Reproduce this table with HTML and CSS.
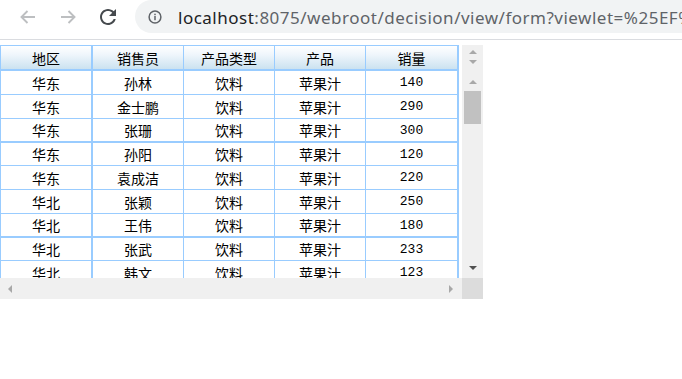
FILE: index.html
```html
<!DOCTYPE html>
<html lang="zh-CN">
<head>
<meta charset="utf-8">
<title>form</title>
<link rel="stylesheet" href="styles.css">
</head>
<body>
<div class="toolbar">
  <svg class="icon" viewBox="0 0 24 24" width="24" height="24"><path d="M19 12H5.5M11.5 6l-6 6 6 6" fill="none" stroke="#bdbfc1" stroke-width="1.9"/></svg>
  <svg class="icon" viewBox="0 0 24 24" width="24" height="24"><path d="M5 12h13.5M12.5 6l6 6-6 6" fill="none" stroke="#bdbfc1" stroke-width="1.9"/></svg>
  <svg class="icon" viewBox="0 0 24 24" width="24" height="24"><path d="M17.65 6.35C16.2 4.9 14.21 4 12 4c-4.42 0-7.990 3.58-7.99 8s3.57 8 7.99 8c3.73 0 6.84-2.55 7.73-6h-2.08c-.82 2.33-3.04 4-5.65 4-3.31 0-6-2.69-6-6s2.69-6 6-6c1.66 0 3.14.69 4.22 1.78L13 11h7V4l-2.35 2.35z" fill="#464a4e"/></svg>
  <div class="omnibox">
    <svg class="info" viewBox="0 0 14 14" width="14" height="14"><circle cx="7" cy="7" r="5.9" fill="none" stroke="#5f6368" stroke-width="1.5"/><rect x="6.25" y="6" width="1.5" height="4.2" fill="#5f6368"/><rect x="6.25" y="3.7" width="1.5" height="1.5" fill="#5f6368"/></svg>
    <span class="url"><span class="host">localhost</span><span class="path">:8075/webroot/decision/view/form?viewlet=%25EF%BC</span></span>
  </div>
</div>
<div class="report">
  <div class="grid">
    <div class="sheet">
      <div class="row head"><div class="c c1">地区</div><div class="c">销售员</div><div class="c">产品类型</div><div class="c">产品</div><div class="c c5">销量</div></div>
      <div class="row"><div class="c c1">华东</div><div class="c">孙林</div><div class="c">饮料</div><div class="c">苹果汁</div><div class="c c5 num">140</div></div>
      <div class="row"><div class="c c1">华东</div><div class="c">金士鹏</div><div class="c">饮料</div><div class="c">苹果汁</div><div class="c c5 num">290</div></div>
      <div class="row thick"><div class="c c1">华东</div><div class="c">张珊</div><div class="c">饮料</div><div class="c">苹果汁</div><div class="c c5 num">300</div></div>
      <div class="row thin"><div class="c c1">华东</div><div class="c">孙阳</div><div class="c">饮料</div><div class="c">苹果汁</div><div class="c c5 num">120</div></div>
      <div class="row"><div class="c c1">华东</div><div class="c">袁成洁</div><div class="c">饮料</div><div class="c">苹果汁</div><div class="c c5 num">220</div></div>
      <div class="row"><div class="c c1">华北</div><div class="c">张颖</div><div class="c">饮料</div><div class="c">苹果汁</div><div class="c c5 num">250</div></div>
      <div class="row thick"><div class="c c1">华北</div><div class="c">王伟</div><div class="c">饮料</div><div class="c">苹果汁</div><div class="c c5 num">180</div></div>
      <div class="row thin"><div class="c c1">华北</div><div class="c">张武</div><div class="c">饮料</div><div class="c">苹果汁</div><div class="c c5 num">233</div></div>
      <div class="row"><div class="c c1">华北</div><div class="c">韩文</div><div class="c">饮料</div><div class="c">苹果汁</div><div class="c c5 num">123</div></div>
    </div>
  </div>
  <div class="vscroll">
    <div class="up off a1"></div>
    <div class="down off a2"></div>
    <div class="up off a3"></div>
    <div class="thumb"></div>
    <div class="spacer"></div>
    <div class="down on a4"></div>
  </div>
  <div class="hscroll">
    <div class="left"></div>
    <div class="right"></div>
  </div>
  <div class="corner"></div>
</div>
</body>
</html>
```
FILE: styles.css
```css
html, body {
  margin: 0;
  padding: 0;
  background: #ffffff;
}
body {
  width: 682px;
  height: 379px;
  overflow: hidden;
}
.toolbar {
  height: 39px;
  border-bottom: 1px solid #dadce0;
  box-sizing: content-box;
  display: flex;
  align-items: flex-start;
  padding-left: 16px;
  gap: 16px;
  overflow: hidden;
}
.icon {
  display: block;
  margin-top: 5px;
  flex: none;
}
.omnibox {
  flex: none;
  width: 560px;
  height: 33px;
  margin-left: -1px;
  background: #f1f3f4;
  border-radius: 17px 0 0 17px;
  display: flex;
  align-items: center;
  padding-left: 13px;
  box-sizing: border-box;
  white-space: nowrap;
  overflow: hidden;
}
.info {
  display: block;
  flex: none;
}
.url {
  margin-left: 16px;
  font-family: "Noto Sans", "Open Sans", sans-serif;
  font-size: 17px;
  letter-spacing: 0.5px;
  position: relative;
  top: 1px;
}
.host { color: #202124; }
.path { color: #5f6368; }

.report {
  margin-top: 5px;
  display: grid;
  grid-template-columns: 462px 21px;
  grid-template-rows: 233px 21px;
}
.grid {
  overflow: hidden;
  background: #ffffff;
}
.sheet {
  width: 459px;
  box-sizing: border-box;
  border-left: 1px solid #99ccff;
}
.row {
  display: grid;
  grid-template-columns: 92px 91px 91px 91px 93px;
  height: 24px;
  box-sizing: border-box;
  border-bottom: 1px solid #99ccff;
  font-family: "Noto Sans CJK SC", "Noto Sans CJK JP", sans-serif;
  font-size: 14px;
  color: #000000;
}
.row.head {
  height: 26px;
  border-top: 1px solid #99ccff;
  border-bottom: 2px solid #99ccff;
  background: linear-gradient(#ffffff 0%, #eef5fb 40%, #cbe2f0 100%);
}
.row.thick {
  border-bottom-width: 2px;
}
.row.thin {
  height: 23px;
}
.c {
  display: flex;
  align-items: center;
  justify-content: center;
  border-right: 1px solid #99ccff;
  white-space: nowrap;
  overflow: hidden;
}
.c1, .c5 {
  border-right-width: 2px;
}
.num {
  font-family: "Liberation Mono", "DejaVu Sans Mono", monospace;
  font-size: 13px;
}

.vscroll {
  background: #f0f0f0;
  display: flex;
  flex-direction: column;
  align-items: center;
}
.up, .down {
  width: 0;
  height: 0;
  border-left: 4px solid transparent;
  border-right: 4px solid transparent;
  flex: none;
}
.up.off { border-bottom: 4px solid #a8a8a8; }
.down.off { border-top: 4px solid #a8a8a8; }
.down.on { border-top: 4px solid #505050; }
.a1 { margin-top: 5px; }
.a2 { margin-top: 6px; }
.a3 { margin-top: 16px; }
.thumb {
  margin-top: 7px;
  width: 17px;
  height: 33px;
  background: #c1c1c1;
  flex: none;
}
.spacer { flex: 1; }
.a4 { margin-bottom: 8px; }

.hscroll {
  background: #f0f0f0;
  display: flex;
  align-items: center;
  justify-content: space-between;
  padding: 0 9px 0 8px;
}
.left, .right {
  width: 0;
  height: 0;
  border-top: 4px solid transparent;
  border-bottom: 4px solid transparent;
}
.left { border-right: 4px solid #a8a8a8; }
.right { border-left: 4px solid #a8a8a8; }
.corner {
  background: #dcdcdc;
}
```
